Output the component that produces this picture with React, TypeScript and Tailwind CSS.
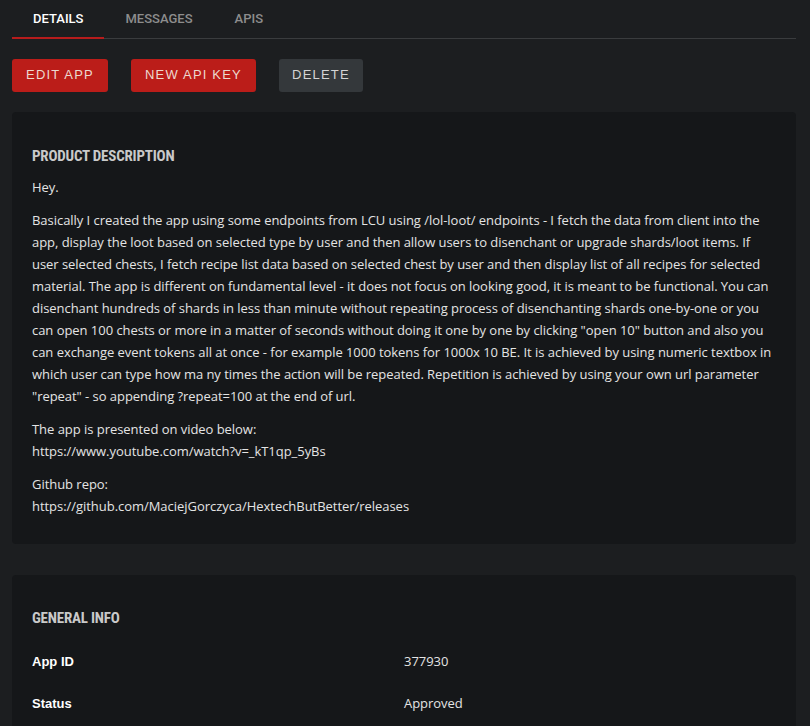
import React from "react"

const tabs = ["Details", "Messages", "APIs"]

const description = [
  "Hey.",
  'Basically I created the app using some endpoints from LCU using /lol-loot/ endpoints - I fetch the data from client into the app, display the loot based on selected type by user and then allow users to disenchant or upgrade shards/loot items. If user selected chests, I fetch recipe list data based on selected chest by user and then display list of all recipes for selected material. The app is different on fundamental level - it does not focus on looking good, it is meant to be functional. You can disenchant hundreds of shards in less than minute without repeating process of disenchanting shards one-by-one or you can open 100 chests or more in a matter of seconds without doing it one by one by clicking "open 10" button and also you can exchange event tokens all at once - for example 1000 tokens for 1000x 10 BE. It is achieved by using numeric textbox in which user can type how ma ny times the action will be repeated. Repetition is achieved by using your own url parameter "repeat" - so appending ?repeat=100 at the end of url.',
]

const info = [
  { label: "App ID", value: "377930" },
  { label: "Status", value: "Approved" },
]

export default function App() {
  return (
    <div className="min-h-screen bg-[#1c1e20] pl-3 pr-[14px] font-['Open_Sans',sans-serif] text-[13px] tracking-[-0.04px] text-[#e4e4e4]">
      {/* Tabs */}
      <div className="flex border-b border-[#3a3c3e]">
        {tabs.map((t, i) => (
          <div
            key={t}
            className={
              "px-[21px] pt-[9px] pb-[8px] font-['Roboto',sans-serif] text-[13px] font-medium tracking-normal uppercase -mb-px border-b-2 " +
              (i === 0 ? "border-[#b71c1c] text-white" : "border-transparent text-[#8d8d8d]")
            }
          >
            {t}
          </div>
        ))}
      </div>

      {/* Actions */}
      <div className="flex gap-[23px] pt-5 pb-5 font-['Liberation_Sans',sans-serif] tracking-[1.2px]">
        <button className="h-[33px] w-[96px] rounded-[3px] bg-[#bb1d19] text-[13px] text-[#ecd9cf]">
          EDIT APP
        </button>
        <button className="h-[33px] w-[125px] rounded-[3px] bg-[#bb1d19] text-[13px] text-[#ecd9cf]">
          NEW API KEY
        </button>
        <button className="h-[33px] w-[84px] rounded-[3px] bg-[#34383b] text-[13px] text-[#d4d4d4]">
          DELETE
        </button>
      </div>

      {/* Product description */}
      <div className="rounded-[4px] bg-[#151719] px-5 pt-[33px] pb-[27px]">
        <h2 className="mb-[9px] font-['Roboto_Condensed','Liberation_Sans_Narrow',sans-serif] text-[15px] font-bold uppercase text-[#c9c9c9] tracking-[-0.2px]">
          Product Description
        </h2>
        {description.map((p, i) => (
          <p key={i} className="mb-[11px] leading-[22px]">
            {p}
          </p>
        ))}
        <p className="mb-[11px] leading-[22px]">
          The app is presented on video below:
          <br />
          https://www.youtube.com/watch?v=_kT1qp_5yBs
        </p>
        <p className="leading-[22px]">
          Github repo:
          <br />
          https://github.com/MaciejGorczyca/HextechButBetter/releases
        </p>
      </div>

      {/* General info */}
      <div className="mt-[31px] rounded-[4px] bg-[#151719] px-5 pt-[32px] pb-4">
        <h2 className="mb-[11px] font-['Roboto_Condensed','Liberation_Sans_Narrow',sans-serif] text-[15px] font-bold uppercase text-[#c9c9c9] tracking-[-0.2px]">
          General Info
        </h2>
        {info.map((r) => (
          <div key={r.label} className="grid h-[42px] grid-cols-2 items-center">
            <div className="font-['Liberation_Sans',sans-serif] font-bold tracking-normal text-white">{r.label}</div>
            <div>{r.value}</div>
          </div>
        ))}
      </div>
    </div>
  )
}
